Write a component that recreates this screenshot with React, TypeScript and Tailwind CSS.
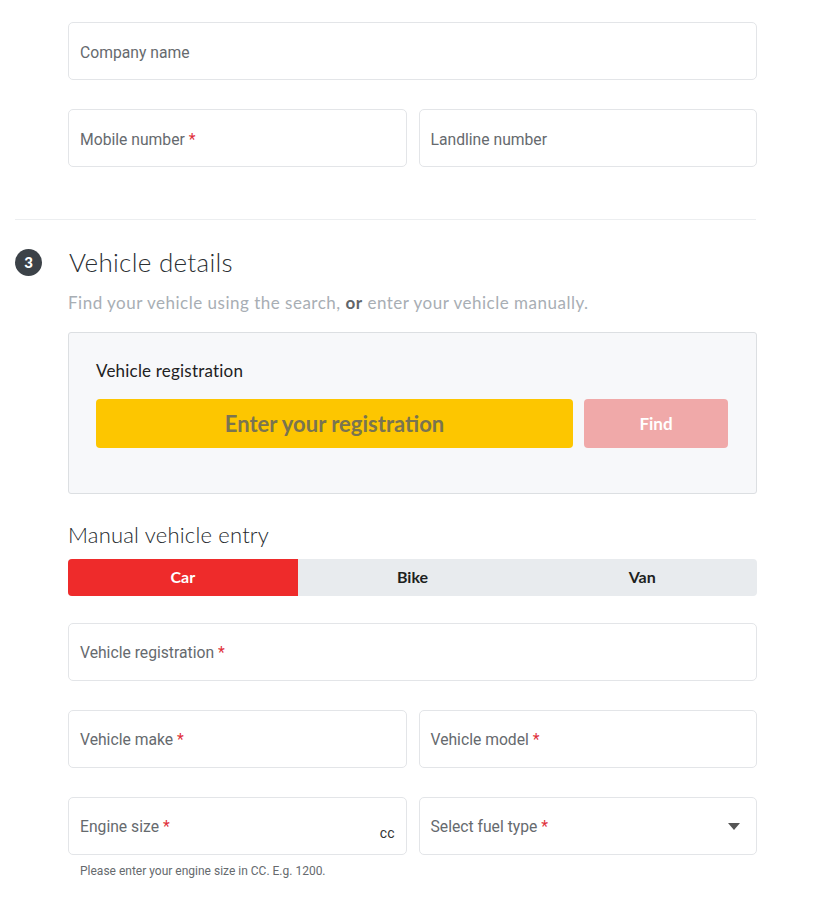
import React from "react";

const Req = () => <span className="text-[#e0303a] ml-1">*</span>;

function Field({ label, required, suffix, select }: { label: string; required?: boolean; suffix?: string; select?: boolean }) {
  return (
    <div className="relative h-[58px] shrink-0 flex items-center pt-[3px] px-[11px] bg-white border border-[#e3e5e8] rounded-[5px] flex-1">
      <span className="text-[15.7px] text-[#666a6e]" style={{ fontFamily: "Roboto, sans-serif" }}>
        {label}
        {required && <Req />}
      </span>
      {suffix && (
        <span className="absolute right-[11px] bottom-[10px] text-[14px] text-[#333]" style={{ fontFamily: "Roboto, sans-serif" }}>
          {suffix}
        </span>
      )}
      {select && (
        <svg className="absolute right-[16px] top-[25px]" width="12" height="7" viewBox="0 0 12 7">
          <path d="M0 0h12L6 7z" fill="#555" />
        </svg>
      )}
    </div>
  );
}

export default function App() {
  const tabs = ["Car", "Bike", "Van"];
  return (
    <main className="min-h-screen bg-white pt-[22px]" style={{ fontFamily: "Lato, sans-serif" }}>
      <div className="ml-[68px] w-[689px] flex flex-col gap-[29px]">
        <div className="flex">
          <Field label="Company name" />
        </div>
        <div className="flex gap-[12px]">
          <Field label="Mobile number" required />
          <Field label="Landline number" />
        </div>
      </div>

      <div className="ml-[15px] w-[741px] border-t border-[#eceef0] mt-[52px]" />

      <div className="flex items-center mt-[23px] ml-[15px]">
        <div className="w-[27px] h-[27px] rounded-full bg-[#3c4248] text-white text-[15px] font-black flex items-center justify-center">3</div>
        <h2 className="ml-[27px] text-[26px] font-light text-[#2b2f33] tracking-[0.3px]">Vehicle details</h2>
      </div>

      <div className="ml-[68px] w-[689px]">
        <p className="mt-[8px] text-[17px] tracking-[0.5px] text-[#a8aeb4]">
          Find your vehicle using the search, <span className="font-bold text-[#5f656a]">or</span> enter your vehicle manually.
        </p>

        <div className="mt-[16px] h-[162px] bg-[#f7f8fa] border border-[#dcdfe2] rounded-[3px] px-[27px] pt-[25px]">
          <div className="text-[17px] tracking-[0.2px] text-[#222]">Vehicle registration</div>
          <div className="flex gap-[11px] mt-[16px] w-[632px]">
            <div className="flex-1 h-[49px] bg-[#fdc600] rounded-[4px] flex items-center justify-center text-[22px] font-bold text-[#7a7450]">
              Enter your registration
            </div>
            <div className="w-[144px] h-[49px] bg-[#f0a9a9] rounded-[4px] flex items-center justify-center text-[17px] font-bold text-white">
              Find
            </div>
          </div>
        </div>

        <h3 className="mt-[24px] text-[22px] font-light tracking-[0.2px] text-[#24282c]">Manual vehicle entry</h3>
        <div className="mt-[8px] flex h-[37px] rounded-[4px] overflow-hidden bg-[#e8ebee]">
          {tabs.map((t, i) => (
            <div
              key={t}
              className={`flex-1 flex items-center justify-center text-[16px] font-bold ${i === 0 ? "bg-[#ee2b2b] text-white" : "text-[#1d1f21]"}`}
            >
              {t}
            </div>
          ))}
        </div>

        <div className="mt-[27px] flex flex-col gap-[29px]">
          <div className="flex">
            <Field label="Vehicle registration" required />
          </div>
          <div className="flex gap-[12px]">
            <Field label="Vehicle make" required />
            <Field label="Vehicle model" required />
          </div>
          <div>
            <div className="flex gap-[12px]">
              <Field label="Engine size" required suffix="cc" />
              <Field label="Select fuel type" required select />
            </div>
            <p className="mt-[7px] ml-[12px] text-[12px] text-[#666a6e]" style={{ fontFamily: "Roboto, sans-serif" }}>
              Please enter your engine size in CC. E.g. 1200.
            </p>
          </div>
        </div>
      </div>
    </main>
  );
}
